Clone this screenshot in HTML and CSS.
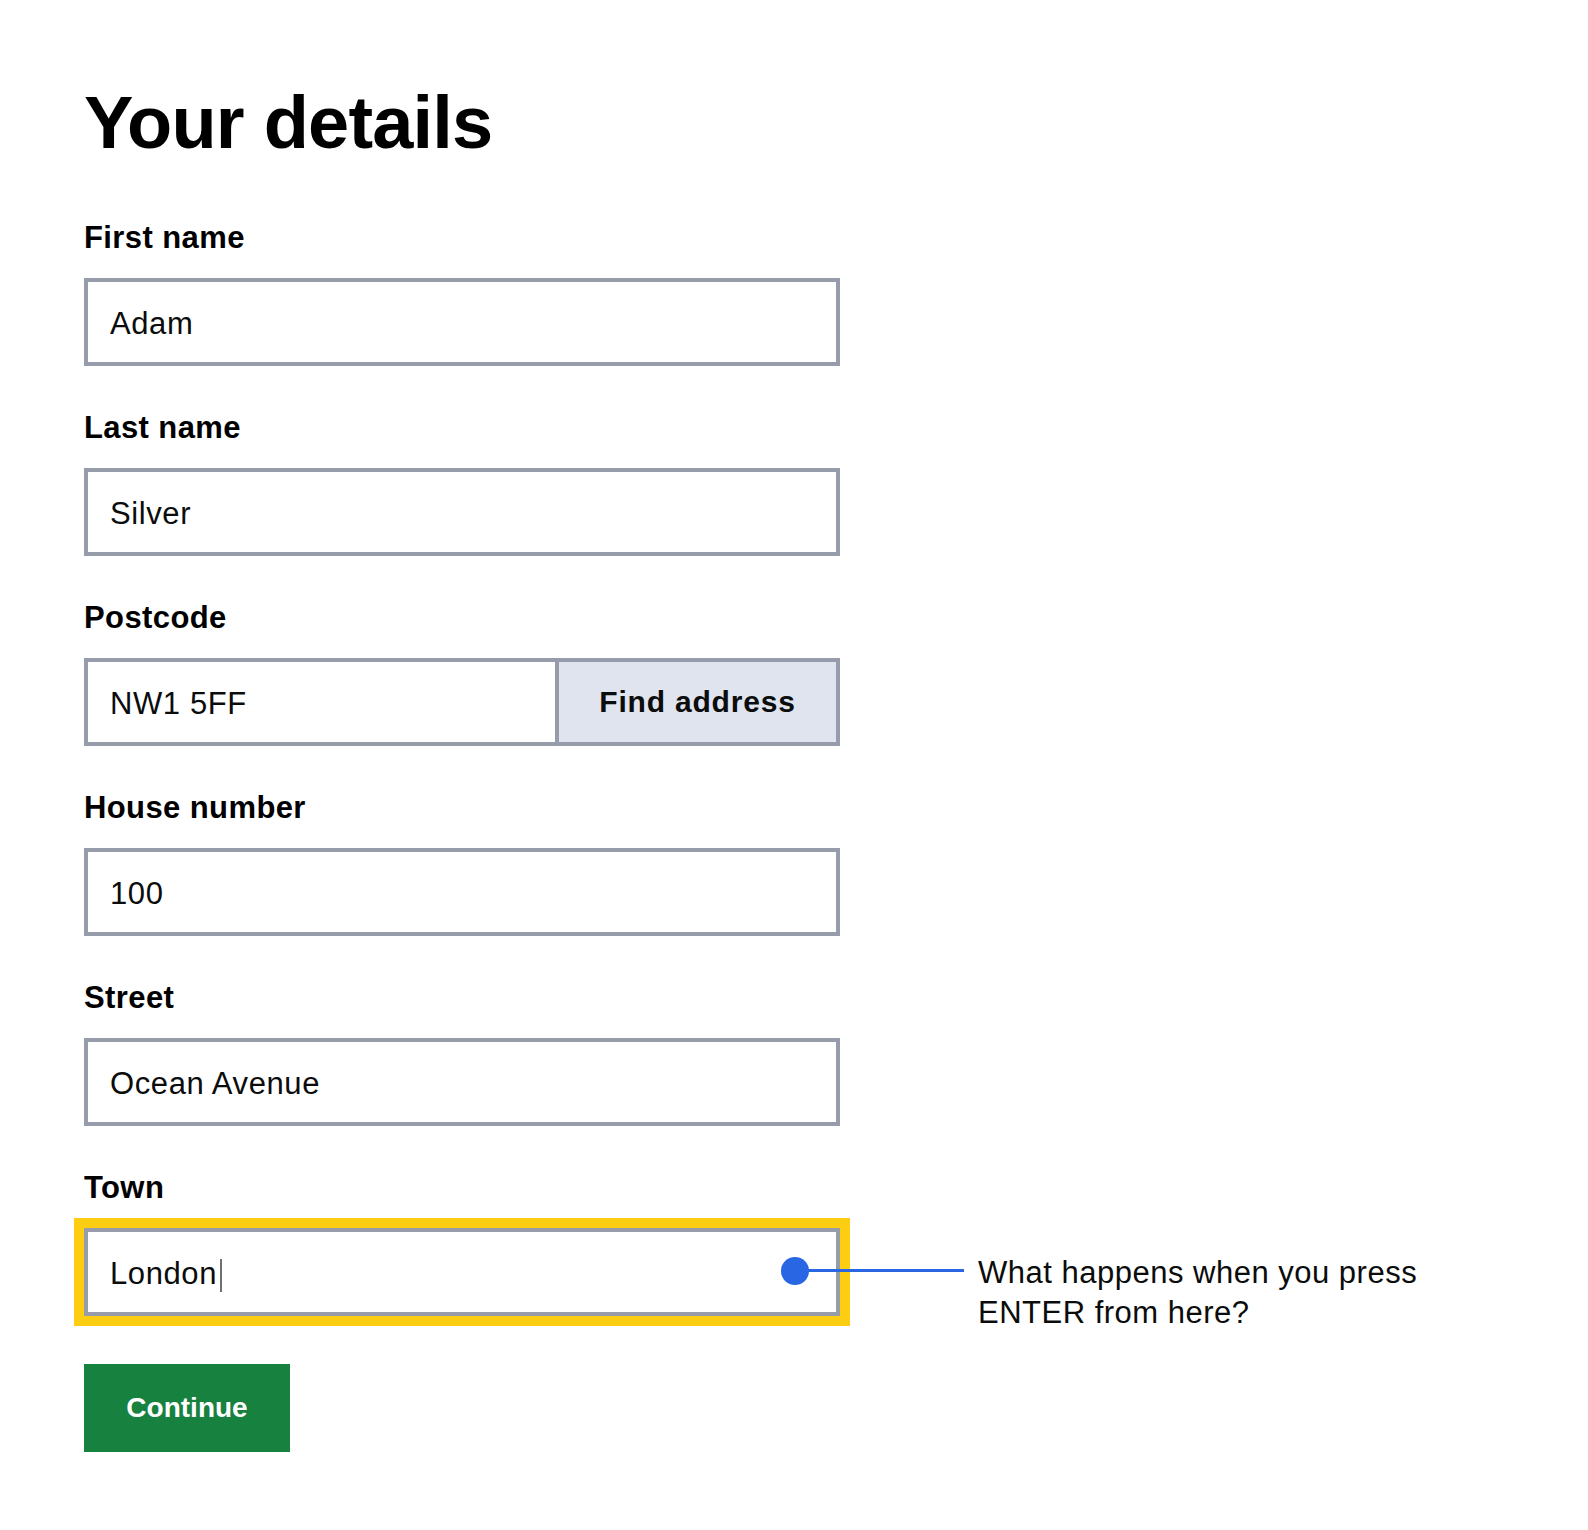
FILE: index.html
```html
<!DOCTYPE html>
<html lang="en">
<head>
<meta charset="utf-8">
<title>Your details</title>
<link rel="stylesheet" href="styles.css">
</head>
<body>
<main class="page">
  <h1 class="title">Your details</h1>
  <form class="form" onsubmit="return false">
    <div class="field">
      <label class="label" for="first">First name</label>
      <input class="input" id="first" type="text" value="Adam">
    </div>
    <div class="field">
      <label class="label" for="last">Last name</label>
      <input class="input" id="last" type="text" value="Silver">
    </div>
    <div class="field">
      <label class="label" for="postcode">Postcode</label>
      <div class="postcode-row">
        <input class="input input-postcode" id="postcode" type="text" value="NW1 5FF">
        <button class="find-btn" type="button">Find address</button>
      </div>
    </div>
    <div class="field">
      <label class="label" for="house">House number</label>
      <input class="input" id="house" type="text" value="100">
    </div>
    <div class="field">
      <label class="label" for="street">Street</label>
      <input class="input" id="street" type="text" value="Ocean Avenue">
    </div>
    <div class="field field-last">
      <span class="label">Town</span>
      <div class="town-row">
        <div class="focus-wrap">
          <div class="input input-focused" role="textbox" aria-label="Town">London<span class="caret"></span></div>
          <span class="dot"></span>
          <span class="connector"></span>
        </div>
        <p class="note">What happens when you press<br>ENTER from here?</p>
      </div>
    </div>
    <button class="continue" type="submit">Continue</button>
  </form>
</main>
</body>
</html>
```
FILE: styles.css
```css
html, body {
  margin: 0;
  padding: 0;
  background: #ffffff;
}

body {
  font-family: "Liberation Sans", Arial, Helvetica, sans-serif;
  color: #0b0c0c;
}

.page {
  padding: 86px 0 60px 84px;
}

.title {
  margin: 0 0 60px;
  font-size: 74px;
  line-height: 74px;
  font-weight: 700;
  letter-spacing: -0.8px;
  color: #000;
}

.form {
  display: flex;
  flex-direction: column;
  align-items: flex-start;
  margin: 0;
}

.field {
  display: flex;
  flex-direction: column;
  align-items: flex-start;
  gap: 22px;
  margin-bottom: 44px;
}

.field-last {
  margin-bottom: 48px;
}

.label {
  display: block;
  font-size: 31px;
  line-height: 36px;
  font-weight: 700;
  letter-spacing: 0.4px;
  color: #000;
}

.input {
  box-sizing: border-box;
  width: 756px;
  height: 88px;
  margin: 0;
  padding: 4px 22px 0;
  border: 4px solid #979caa;
  border-radius: 0;
  background: #ffffff;
  font-family: "Liberation Sans", Arial, Helvetica, sans-serif;
  font-size: 31px;
  letter-spacing: 0.6px;
  color: #0b0c0c;
  outline: none;
  -webkit-appearance: none;
  appearance: none;
}

.postcode-row {
  display: flex;
}

.input-postcode {
  width: 471px;
  border-right: 0;
}

.find-btn {
  box-sizing: border-box;
  width: 285px;
  height: 88px;
  margin: 0;
  padding: 0;
  border: 4px solid #979caa;
  border-radius: 0;
  background: #dfe4ee;
  font-family: "Liberation Sans", Arial, Helvetica, sans-serif;
  font-size: 30px;
  font-weight: 700;
  letter-spacing: 0.8px;
  color: #0b0c0c;
  cursor: pointer;
}

.town-row {
  display: flex;
  align-items: flex-start;
  height: 88px;
}

.focus-wrap {
  position: relative;
  width: 756px;
  height: 88px;
  flex: none;
}

.input-focused {
  display: flex;
  align-items: center;
  outline: 10px solid #fccd12;
  outline-offset: 0;
}

.caret {
  display: block;
  width: 2px;
  height: 33px;
  margin-left: 3px;
  margin-top: 2px;
  background: #707070;
}

.dot {
  position: absolute;
  left: 697px;
  top: 29px;
  width: 28px;
  height: 28px;
  border-radius: 50%;
  background: #2866e4;
}

.connector {
  position: absolute;
  left: 711px;
  top: 41px;
  width: 169px;
  height: 3px;
  background: #2866e4;
}

.note {
  margin: 25px 0 0 138px;
  font-size: 31px;
  line-height: 40px;
  letter-spacing: 0.5px;
  color: #0b0c0c;
  white-space: nowrap;
}

.continue {
  width: 206px;
  height: 88px;
  margin: 0;
  padding: 0;
  border: 0;
  border-radius: 0;
  background: #17813f;
  color: #ffffff;
  font-family: "Liberation Sans", Arial, Helvetica, sans-serif;
  font-size: 28px;
  font-weight: 700;
  cursor: pointer;
}
```
